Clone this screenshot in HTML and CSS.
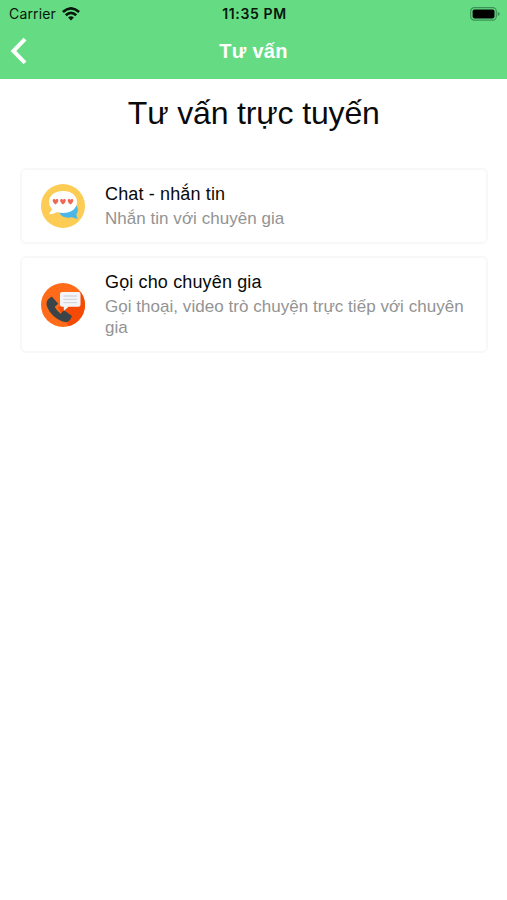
FILE: index.html
```html
<!DOCTYPE html>
<html lang="vi">
<head>
<meta charset="utf-8">
<title>Tư vấn</title>
<link rel="stylesheet" href="styles.css">
</head>
<body>
<header class="top">
  <div class="status">
    <div class="carrier"><span class="carrier-name">Carrier</span>
      <svg class="wifi" viewBox="0 0 18 14" width="18" height="14" fill="none" stroke="#06170b" stroke-width="2.7"><path d="M.9 5.100Q9-2.300 17.100 5.100M3.800 8.200Q9 3.400 14.200 8.200"/><path d="M9 13.400 6.100 10.500Q9 8.200 11.900 10.500Z" fill="#06170b" stroke="none"/></svg>
    </div>
    <span class="clock">11:35 PM</span>
    <svg class="battery" viewBox="0 0 30 14" width="30" height="14"><rect x=".7" y=".7" width="25.6" height="12.4" rx="3.6" fill="none" stroke="#3c9355" stroke-width="1.2"/><rect x="2.6" y="2.5" width="21.9" height="8.9" rx="1.8" fill="#000"/><path d="M27.700 4.800Q29.800 5.500 29.800 6.900T27.700 9Z" fill="#3c9355"/></svg>
  </div>
  <nav class="nav">
    <svg class="back" viewBox="0 0 18 28" width="18" height="28" fill="none" stroke="#fff" stroke-width="4"><path d="M15 2.200 3.400 14 15 25.800"/></svg>
    <span class="nav-title">Tư vấn</span>
    <span></span>
  </nav>
</header>
<main class="content">
  <h1 class="title">Tư vấn trực tuyến</h1>
  <section class="card">
    <svg class="icon" viewBox="0 0 44 44" width="44" height="44">
      <circle cx="22" cy="22" r="22" fill="#fdcc55"/>
      <path d="M18 28C20 33 25 34.500 31 33.200L36.500 35 35.300 30.500C37.800 27.500 37.500 22 33 19Z" fill="#4ab7e8"/>
      <path d="M22 7C13.500 7 8 11.500 8 18Q8 22 11 25L8 30.300Q13 30.200 16 28Q19 29 22 29C30.500 29 36 24.500 36 18S30.500 7 22 7Z" fill="#fff"/>
      <g fill="#f16655"><path id="heart" d="M14.500 20.600C10.700 17.700 11.300 15 13.100 15Q14.200 15 14.500 16Q14.800 15 15.900 15C17.700 15 18.300 17.700 14.500 20.600Z"/><use href="#heart" x="7.500"/><use href="#heart" x="15"/></g>
    </svg>
    <div class="text">
      <h2 class="name">Chat - nhắn tin</h2>
      <p class="desc">Nhắn tin với chuyên gia</p>
    </div>
  </section>
  <section class="card card-tall">
    <svg class="icon" viewBox="0 0 44 44" width="44" height="44">
      <defs><clipPath id="disc"><circle cx="22" cy="22" r="22"/></clipPath></defs>
      <g clip-path="url(#disc)">
        <path d="M0 0H44V44H0Z" fill="#ff6b18"/>
        <path d="M39.500 9 44 13.500V44H28L25 38 17 24.500Z" fill="#f54a06"/>
      </g>
      <path d="M10.800 13.500Q5 16.500 5.500 21.500C7.500 30 16 38 25 39.200Q28.500 39.200 31 33L23 27.300 19.700 30.700Q15.300 27.500 13.700 23.800L17.300 20.700Z" fill="#3b4448"/>
      <path d="M21 9H37.500Q39.500 9 39.500 11V21.700Q39.500 23.700 37.500 23.700H27.500L22.800 28V23.700H21Q19 23.700 19 21.700V11Q19 9 21 9Z" fill="#f3f4f7"/>
      <path d="M22.500 13H36M22.500 16.300H36M22.500 19.600H36" stroke="#d3d7df" stroke-width="1.3"/>
    </svg>
    <div class="text">
      <h2 class="name">Gọi cho chuyên gia</h2>
      <p class="desc">Gọi thoại, video trò chuyện trực tiếp với chuyên gia</p>
    </div>
  </section>
</main>
</body>
</html>
```
FILE: styles.css
```css
* { box-sizing: border-box; }
body { margin: 0; background: #fff; font-family: "Liberation Sans", Arial, sans-serif; }
.top { height: 79px; background: #65dc83; }
.status {
  height: 27px;
  padding: 0 7px 0 9px;
  display: grid;
  grid-template-columns: 1fr auto 1fr;
  align-items: center;
  font-family: Inter, sans-serif;
  color: #06170b;
}
.carrier { display: flex; align-items: center; gap: 6px; }
.carrier-name { font-size: 14px; letter-spacing: 0.15px; }
.clock { font-size: 14px; font-weight: 600; letter-spacing: 0.65px; }
.battery { justify-self: end; }
.nav {
  height: 48px;
  padding: 0 10px;
  display: grid;
  grid-template-columns: 1fr auto 1fr;
  align-items: center;
}
.nav-title { color: #fff; font-size: 20px; font-weight: 700; letter-spacing: 0.3px; }
.content { padding: 0 19.5px 0 20px; }
.title { margin: 0; padding-top: 16px; font-size: 32px; line-height: 36px; font-weight: 400; letter-spacing: -0.15px; text-align: center; color: #0a0a0a; }
.card {
  height: 76px;
  margin-top: 37px;
  padding: 0 19px;
  display: flex;
  align-items: center;
  gap: 20px;
  border: 2px solid #f8f8f8;
  border-radius: 6px;
}
.card-tall { height: 97px; margin-top: 12px; }
.icon { flex: none; }
.text { flex: 1; margin-top: -1px; }
.name { margin: 0; font-size: 18px; line-height: 23px; font-weight: 400; letter-spacing: 0.14px; color: #0a0a0a; }
.desc { margin: 2px 0 0; font-size: 17px; line-height: 21px; letter-spacing: 0.035px; color: #939393; }
```
